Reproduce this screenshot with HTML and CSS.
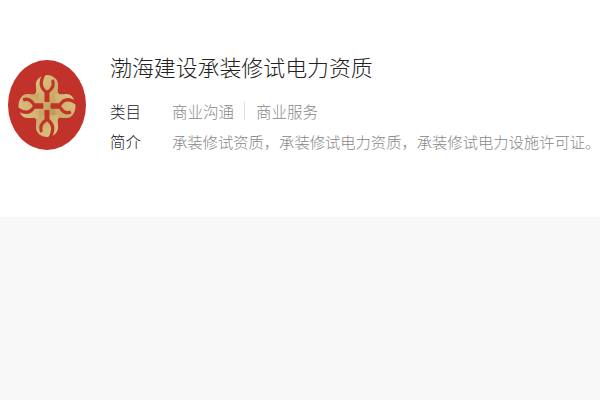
FILE: index.html
```html
<!DOCTYPE html>
<html lang="zh-CN">
<head>
    <meta charset="UTF-8">
    <meta name="viewport" content="width=device-width, initial-scale=1.0">
    <title>渤海建设承装修试电力资质</title>
    <link rel="stylesheet" href="styles.css">
</head>
<body>
    <div class="profile">
        <svg class="logo" width="78" height="90" viewBox="0 0 78 90">
            <defs>
                <linearGradient id="gold" gradientUnits="userSpaceOnUse" x1="-28" y1="-30" x2="28" y2="30">
                    <stop offset="0" stop-color="#e6cf90"/>
                    <stop offset="0.5" stop-color="#c9a664"/>
                    <stop offset="1" stop-color="#a07c3b"/>
                </linearGradient>
                <g id="lobe">
                    <path d="M-13 -9 C-11 -13 -12 -16 -12 -20 C-13 -27 -6 -31 0 -31 C6 -31 13 -27 12 -20 C12 -16 11 -13 13 -9 Z"/>
                    <path class="wrench" d="M-3 -32 C-8 -24 -7 -18 -1 -14 L-1 -4"/>
                    <path class="wrench" d="M6 -26 C8 -21 6 -17 1 -14 L1 -4"/>
                </g>
            </defs>
            <ellipse cx="39" cy="45" rx="39" ry="45" fill="#c1322b"/>
            <g transform="translate(39 46) scale(0.92 1)" fill="url(#gold)">
                <rect x="-13" y="-13" width="26" height="26"/>
                <use href="#lobe"/>
                <use href="#lobe" transform="rotate(90)"/>
                <use href="#lobe" transform="rotate(180)"/>
                <use href="#lobe" transform="rotate(270)"/>
            </g>
        </svg>
        <div class="info">
            <h1>渤海建设承装修试电力资质</h1>
            <div class="row row-first">
                <span class="label">类目</span>
                <span class="value">商业沟通</span>
                <span class="divider"></span>
                <span class="value">商业服务</span>
            </div>
            <div class="row">
                <span class="label">简介</span>
                <span class="value desc">承装修试资质，承装修试电力资质，承装修试电力设施许可证。</span>
            </div>
        </div>
    </div>
</body>
</html>
```

FILE: styles.css
```css
* {
    margin: 0;
    padding: 0;
    box-sizing: border-box;
    font-family: "Noto Sans CJK SC", "Liberation Sans", sans-serif;
}

html, body {
    overflow: hidden;
}

body {
    background: #f8f8f8;
    height: 400px;
}

.profile {
    background: #fff;
    height: 217px;
    padding: 60px 0 0 8px;
    display: flex;
    gap: 24px;
}

.logo {
    flex-shrink: 0;
}

.wrench {
    fill: none;
    stroke: #c1322b;
    stroke-width: 3.4;
}

.info {
    flex: 1;
    min-width: 0;
}

.info h1 {
    font-size: 21.9px;
    font-weight: 300;
    line-height: 16px;
    margin-top: -1px;
    color: #222;
}

.row {
    display: flex;
    align-items: center;
    height: 30px;
    font-size: 15.5px;
    font-weight: 300;
    white-space: nowrap;
}

.row-first {
    margin-top: 21px;
}

.label {
    width: 62px;
    flex-shrink: 0;
    color: #222;
}

.value {
    color: #888;
}

.desc {
    font-size: 15.3px;
}

.divider {
    width: 1px;
    height: 18px;
    margin: 0 11px 0 10px;
    background: #ddd;
}
```
